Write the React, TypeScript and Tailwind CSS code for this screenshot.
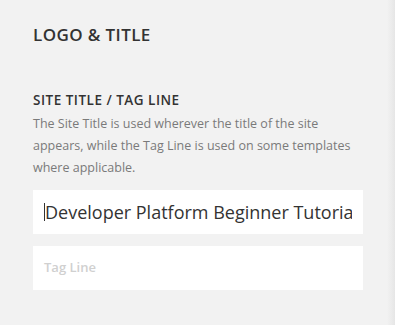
export default function App() {
  return (
    <div className="flex h-[325px] w-[395px] bg-[#f2f2f2] font-['Open_Sans','Liberation_Sans',sans-serif]">
      <div className="min-w-0 flex-1 pl-[33px] pr-[24px]">
        <h1 className="mt-[24px] text-[17px] font-semibold leading-[22px] tracking-[0.4px] text-[#333]">
          LOGO &amp; TITLE
        </h1>
        <h2 className="mt-[45px] text-[13.5px] font-semibold leading-[18px] tracking-[0.5px] text-[#333]">
          SITE TITLE / TAG LINE
        </h2>
        <p className="mt-[4px] text-[12.5px] leading-[22px] text-[#7a7a7a]">
          The Site Title is used wherever the title of the site appears, while the Tag Line is used on some templates where applicable.
        </p>
        <div className="mt-[11px] flex flex-col gap-[12px]">
          <div className="flex h-[44px] items-center bg-white pl-[11px] pr-[11px]">
            <span className="h-[18px] w-px shrink-0 bg-[#333]" />
            <span className="min-w-0 flex-1 overflow-hidden whitespace-nowrap text-[18px] text-[#333]">
              Developer Platform Beginner Tutorial
            </span>
          </div>
          <div className="flex h-[44px] items-center bg-white pl-[11px]">
            <span className="text-[13px] font-semibold text-[#d0d0d0]">Tag Line</span>
          </div>
        </div>
      </div>
      <div className="w-[8px] bg-gradient-to-r from-[#f2f2f2] to-[#e6e6e6]" />
    </div>
  );
}
